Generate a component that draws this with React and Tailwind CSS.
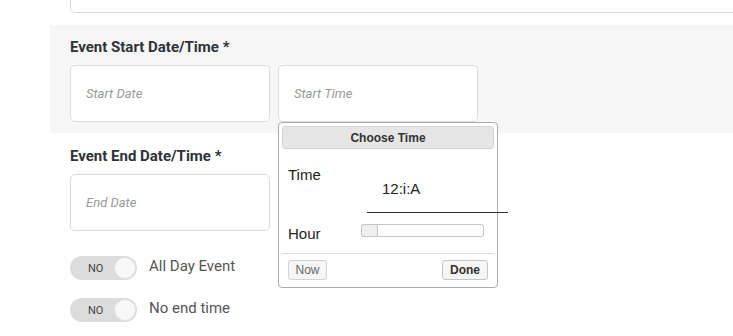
import React from 'react';

const Toggle = ({ label }) => (
  <div className="flex items-center">
    <div className="w-[67px] h-[24px] rounded-full bg-[#dcdcdc] flex items-center justify-between pl-[18px] pr-[1px]">
      <span className="text-[11px] text-[#444] leading-none">NO</span>
      <span className="w-[22px] h-[22px] rounded-full bg-[#f8f8f8] border border-[#e2e2e2]" />
    </div>
    <span className="ml-[12px] text-[15px] text-[#555] leading-[18px] -mt-[4px]">{label}</span>
  </div>
);

const DateBox = ({ placeholder, className = '' }) => (
  <div className={`w-[200px] h-[57px] bg-white border border-[#dcdcdc] rounded-[5px] flex items-center pl-[15px] ${className}`}>
    <span className="italic text-[13px] text-[#9a9a9a]">{placeholder}</span>
  </div>
);

const TimePicker = () => (
  <div className="absolute left-[278px] top-[122px] w-[220px] h-[166px] bg-white border border-[#aaa] rounded-[4px] p-[3px] font-['Liberation_Sans',Arial,sans-serif] text-[#222]">
    <div className="h-[23px] bg-[#e6e6e6] border border-[#d3d3d3] rounded-[3px] flex items-center justify-center text-[12px] font-bold text-[#333]">
      Choose Time
    </div>
    <div className="flex mt-[17px]">
      <div className="w-[85px] shrink-0 pl-[6px] text-[15px] leading-[17px]">Time</div>
      <div className="w-[141px] shrink-0 border-b border-[#333] pt-[14px] pb-[15px] pl-[15px] text-[15px] leading-[17px]">
        12:i:A
      </div>
    </div>
    <div className="flex mt-[12px]">
      <div className="w-[79px] shrink-0 pl-[6px] text-[15px] leading-[17px]">Hour</div>
      <div className="relative w-[123px] h-[13px] -mt-[1px] border border-[#c5c5c5] rounded-[3px] bg-white">
        <div className="absolute -left-[1px] -top-[1px] w-[17px] h-[13px] border border-[#c5c5c5] rounded-[3px] bg-[#efefef]" />
      </div>
    </div>
    <div className="mt-[11px] border-t border-[#ddd]" />
    <div className="flex justify-between px-[6px] mt-[6px]">
      <button className="w-[39px] h-[20px] border border-[#d3d3d3] rounded-[3px] bg-[#f6f6f6] text-[12px] text-[#666]">Now</button>
      <button className="w-[46px] h-[20px] border border-[#c5c5c5] rounded-[3px] bg-[#f6f6f6] text-[12px] font-bold text-[#333]">Done</button>
    </div>
  </div>
);

export default function App() {
  return (
    <div className="relative w-[733px] h-[336px] overflow-hidden bg-white font-['Roboto',sans-serif]">
      <div className="ml-[70px] w-[700px] h-[13px] border border-t-0 border-[#dcdcdc] rounded-bl-[5px]" />
      <div className="mt-[12px] ml-[50px] w-[700px] h-[108px] bg-[#f6f6f6] pl-[20px] pt-[12px]">
        <h3 className="text-[15px] font-bold text-[#2e3338] leading-[20px]">Event Start Date/Time *</h3>
        <div className="flex gap-[8px] mt-[8px]">
          <DateBox placeholder="Start Date" />
          <DateBox placeholder="Start Time" />
        </div>
      </div>
      <div className="pl-[70px] pt-[13px]">
        <h3 className="text-[15px] font-bold text-[#2e3338] leading-[20px]">Event End Date/Time *</h3>
        <DateBox placeholder="End Date" className="mt-[8px] h-[56px]" />
        <div className="mt-[25px] flex flex-col gap-[18px]">
          <Toggle label="All Day Event" />
          <Toggle label="No end time" />
        </div>
      </div>
      <TimePicker />
    </div>
  );
}
